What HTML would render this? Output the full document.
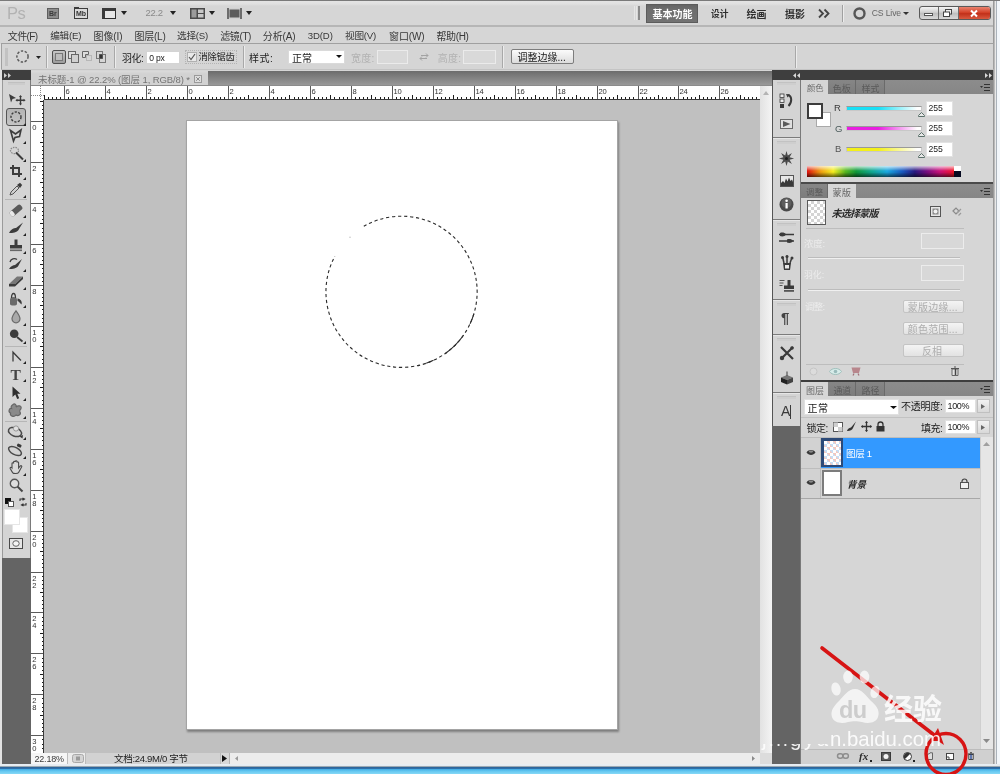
<!DOCTYPE html>
<html><head><meta charset="utf-8"><title>Photoshop</title><style>
*{box-sizing:border-box}
html,body{margin:0;padding:0}
body{width:1000px;height:774px;position:relative;overflow:hidden;background:#d6d6d6;font-family:"Liberation Sans","Noto Sans CJK SC",sans-serif;font-size:10px;color:#222;line-height:1}
.a{position:absolute}
.t{position:absolute;white-space:nowrap;line-height:14px}
svg{position:absolute;overflow:visible}
</style></head><body><div class="a" style="left:0;top:0;width:1000px;height:774px;will-change:transform">
<div class="a" style="left:0px;top:0px;width:1000px;height:774px;background:#d6d6d6"></div>
<div class="a" style="left:0px;top:1px;width:1000px;height:24px;background:linear-gradient(#e4e4e4 0,#e0e0e0 3px,#d6d6d6 5px)"></div>
<div class="a" style="left:0px;top:0px;width:1000px;height:1px;background:#7a7a7a"></div>
<div class="t" style="left:7.0px;top:6.0px;font-size:16.50px;letter-spacing:-0.50px;color:#b2b2b2">Ps</div>
<div class="a" style="left:0px;top:25px;width:1000px;height:1.6px;background:#b6b6b6"></div>
<div class="a" style="left:47px;top:8px;width:12px;height:11px;background:#8c8c8c;border:1px solid #5e5e5e"></div>
<div class="t" style="left:49px;top:8px;font-size:7px;line-height:11px;color:#3a3a3a;font-weight:bold">Br</div>
<div class="a" style="left:74px;top:8px;width:14px;height:11px;background:#d9d9d9;border:1px solid #3c3c3c"></div>
<div class="a" style="left:74px;top:7px;width:5px;height:2px;background:#3c3c3c"></div>
<div class="t" style="left:76px;top:8px;font-size:7px;line-height:11px;color:#333;font-weight:bold">Mb</div>
<div class="a" style="left:102px;top:8px;width:14px;height:11px;background:#e6e6e6;border:1px solid #2e2e2e;border-top:3px solid #3a3a3a;border-left:3px solid #3a3a3a"></div>
<svg style="left:121px;top:11px" width="6" height="4" viewBox="0 0 6 4" ><path d="M0 0H6L3.0 4Z" fill="#222"/></svg>
<div class="t" style="left:145.5px;top:6.0px;font-size:9.50px;letter-spacing:-0.33px;color:#8a8a8a">22.2</div>
<svg style="left:170px;top:11px" width="6" height="4" viewBox="0 0 6 4" ><path d="M0 0H6L3.0 4Z" fill="#222"/></svg>
<svg style="left:190px;top:8px" width="15" height="11" viewBox="0 0 15 11" ><rect x="0" y="0" width="15" height="11" fill="#4a4a4a"/><rect x="1.5" y="1.5" width="5" height="8" fill="#9a9a9a"/><rect x="8" y="1.5" width="5.5" height="3.5" fill="#c8c8c8"/><rect x="8" y="6" width="5.5" height="3.5" fill="#c8c8c8"/></svg>
<svg style="left:209px;top:11px" width="6" height="4" viewBox="0 0 6 4" ><path d="M0 0H6L3.0 4Z" fill="#222"/></svg>
<svg style="left:227px;top:8px" width="15" height="11" viewBox="0 0 15 11" ><rect x="0" y="0" width="15" height="11" fill="#d0d0d0"/><rect x="2.5" y="1.5" width="10" height="8" fill="#5c5c5c"/><path d="M1 0V11M14 0V11" stroke="#444" stroke-width="1.4"/></svg>
<svg style="left:246px;top:11px" width="6" height="4" viewBox="0 0 6 4" ><path d="M0 0H6L3.0 4Z" fill="#222"/></svg>
<div class="a" style="left:638px;top:6px;width:1.6px;height:14px;background:#8a8a8a"></div>
<div class="a" style="left:634px;top:6px;width:1px;height:14px;background:#e6e6e6"></div>
<div class="a" style="left:636px;top:6px;width:1px;height:14px;background:#e6e6e6"></div>
<div class="a" style="left:646px;top:4px;width:52px;height:19px;background:linear-gradient(#646464,#6e6e6e 30%,#727272);border:1px solid #5c5c5c"></div>
<div class="t" style="left:652.5px;top:7.5px;font-size:10px;font-weight:bold;color:#fff">基本功能</div>
<div class="t" style="left:711.0px;top:6.5px;font-size:8.76px;font-weight:bold;color:#2e2e2e">设计</div>
<div class="t" style="left:746.6px;top:7.5px;font-size:10px;font-weight:bold;letter-spacing:-0.10px;color:#2e2e2e">绘画</div>
<div class="t" style="left:785.0px;top:7.5px;font-size:10px;font-weight:bold;color:#2e2e2e">摄影</div>
<svg style="left:818px;top:9px" width="12" height="9" viewBox="0 0 12 9" ><path d="M1 0.5L5 4.5L1 8.5M6.5 0.5L10.5 4.5L6.5 8.5" fill="none" stroke="#444" stroke-width="1.8"/></svg>
<div class="a" style="left:842px;top:5px;width:1px;height:17px;background:#a0a0a0"></div>
<div class="a" style="left:843px;top:5px;width:1px;height:17px;background:#ececec"></div>
<svg style="left:853px;top:7px" width="13" height="13" viewBox="0 0 13 13" ><circle cx="6.5" cy="6.5" r="5" fill="none" stroke="#565656" stroke-width="2.4"/></svg>
<div class="t" style="left:871.7px;top:6.3px;font-size:8.63px;letter-spacing:-0.13px;color:#666">CS Live</div>
<svg style="left:903px;top:12px" width="6" height="3" viewBox="0 0 6 3" ><path d="M0 0H6L3.0 3Z" fill="#333"/></svg>
<div class="a" style="left:919px;top:6px;width:72px;height:14px;border:1px solid #5a5a5a;border-radius:3px;background:linear-gradient(#f4f4f4,#cfcfcf 45%,#bdbdbd 50%,#d8d8d8)"></div>
<div class="a" style="left:958px;top:7px;width:32px;height:12px;background:linear-gradient(#e9836f,#d5432a 45%,#c2311a 55%,#d9593f);border-radius:0 2px 2px 0"></div>
<div class="a" style="left:938px;top:7px;width:1px;height:12px;background:#6a6a6a"></div>
<div class="a" style="left:958px;top:7px;width:1px;height:12px;background:#6a6a6a"></div>
<div class="a" style="left:924px;top:13px;width:9px;height:3px;background:#fff;border:1px solid #555"></div>
<svg style="left:943px;top:9px" width="10" height="8" viewBox="0 0 10 8" ><rect x="2.5" y="0.5" width="6" height="4.5" fill="#eee" stroke="#444"/><rect x="0.5" y="3" width="6" height="4.5" fill="#fff" stroke="#444"/></svg>
<svg style="left:970px;top:10px" width="8" height="7" viewBox="0 0 8 7" ><path d="M1 0.5L7 6.5M7 0.5L1 6.5" stroke="#fff" stroke-width="2"/></svg>
<div class="a" style="left:993px;top:1px;width:7px;height:764px;background:linear-gradient(90deg,#9a9a9a 0,#9a9a9a 1px,#bababa 1px,#bababa 2px,#e8e8e8 2px,#e8e8e8 3.5px,#aab2ba 3.5px,#aab2ba 4.5px,#f2f6fa 4.5px)"></div>
<div class="a" style="left:0px;top:44px;width:1.5px;height:720px;background:#e2e2e2"></div>
<div class="t" style="left:7.8px;top:30.3px;font-size:10px;letter-spacing:-0.62px;color:#383838">文件(F)</div>
<div class="t" style="left:50.2px;top:29.3px;font-size:9.66px;letter-spacing:-0.25px;color:#383838">编辑(E)</div>
<div class="t" style="left:93.5px;top:30.3px;font-size:10px;letter-spacing:-0.12px;color:#383838">图像(I)</div>
<div class="t" style="left:134.5px;top:30.3px;font-size:10px;letter-spacing:-0.25px;color:#383838">图层(L)</div>
<div class="t" style="left:177.0px;top:29.3px;font-size:9.66px;letter-spacing:-0.25px;color:#383838">选择(S)</div>
<div class="t" style="left:220.2px;top:30.3px;font-size:10px;letter-spacing:-0.38px;color:#383838">滤镜(T)</div>
<div class="t" style="left:262.8px;top:30.3px;font-size:10px;letter-spacing:-0.12px;color:#383838">分析(A)</div>
<div class="t" style="left:307.8px;top:29.2px;font-size:9.58px;letter-spacing:-0.12px;color:#383838">3D(D)</div>
<div class="t" style="left:345.0px;top:29.3px;font-size:9.66px;letter-spacing:-0.25px;color:#383838">视图(V)</div>
<div class="t" style="left:389.0px;top:30.3px;font-size:10px;letter-spacing:-0.12px;color:#383838">窗口(W)</div>
<div class="t" style="left:436.5px;top:30.3px;font-size:10px;letter-spacing:-0.38px;color:#383838">帮助(H)</div>
<div class="a" style="left:1px;top:43px;width:993px;height:27px;background:#d5d5d5;border:1px solid #a0a0a0;border-bottom-color:#c4c4c4;border-top-width:1.8px"></div>
<div class="a" style="left:5px;top:48px;width:3px;height:18px;background:#c2c2c2"></div>
<svg style="left:16px;top:50px" width="13" height="13" viewBox="0 0 13 13" ><ellipse cx="6.5" cy="6.5" rx="5.6" ry="5.6" fill="none" stroke="#5a5a5a" stroke-width="1.5" stroke-dasharray="2.4 1.6"/></svg>
<svg style="left:36px;top:56px" width="5" height="3" viewBox="0 0 5 3" ><path d="M0 0H5L2.5 3Z" fill="#222"/></svg>
<div class="a" style="left:46px;top:46px;width:1px;height:22px;background:#a8a8a8"></div>
<div class="a" style="left:47px;top:46px;width:1px;height:22px;background:#ececec"></div>
<div class="a" style="left:52px;top:50px;width:14px;height:14px;border:1px solid #4e4e4e;border-radius:2px;background:linear-gradient(#c6c6c6,#9c9c9c)"></div>
<div class="a" style="left:55px;top:53px;width:8px;height:8px;border:1px solid #777;background:#bdbdbd"></div>
<svg style="left:68px;top:51px" width="11" height="12" viewBox="0 0 11 12" ><rect x="0.5" y="0.5" width="7" height="7" fill="#ddd" stroke="#666"/><rect x="3.5" y="3.5" width="7" height="8" fill="#d0d0d0" stroke="#666"/></svg>
<svg style="left:82px;top:51px" width="10" height="10" viewBox="0 0 10 10" ><path d="M0.5 0.5H6.5V3.5H3.5V6.5H0.5Z" fill="#ddd" stroke="#666"/><rect x="4.5" y="4.5" width="5" height="5" fill="none" stroke="#999" stroke-dasharray="1 1"/></svg>
<svg style="left:96px;top:51px" width="10" height="12" viewBox="0 0 10 12" ><rect x="0.5" y="0.5" width="6" height="7" fill="none" stroke="#777"/><rect x="3.5" y="3.5" width="6" height="8" fill="none" stroke="#777"/><rect x="3.5" y="3.5" width="3" height="4" fill="#333"/></svg>
<div class="a" style="left:114px;top:46px;width:1px;height:22px;background:#a8a8a8"></div>
<div class="a" style="left:115px;top:46px;width:1px;height:22px;background:#ececec"></div>
<div class="t" style="left:122.0px;top:51.5px;font-size:10px;letter-spacing:-0.50px;color:#222">羽化:</div>
<div class="a" style="left:146px;top:51px;width:34px;height:13px;background:#fff;border:1px solid #d4d4d4"></div>
<div class="t" style="left:149.3px;top:51.0px;font-size:8.56px;letter-spacing:-0.20px;color:#222">0 px</div>
<div class="a" style="left:185px;top:50px;width:52px;height:14px;border:1px dotted #b4b4b4"></div>
<div class="a" style="left:187px;top:52px;width:10px;height:10px;background:#e9e9e9;border:1px solid #b0b0b0"></div>
<svg style="left:188px;top:53px" width="8" height="8" viewBox="0 0 8 8" ><path d="M1 4L3 6.5L7 1" fill="none" stroke="#555" stroke-width="1.2"/></svg>
<div class="t" style="left:198.5px;top:50.0px;font-size:9.27px;letter-spacing:-0.27px;color:#1c1c1c">消除锯齿</div>
<div class="a" style="left:243px;top:46px;width:1px;height:22px;background:#a8a8a8"></div>
<div class="a" style="left:244px;top:46px;width:1px;height:22px;background:#ececec"></div>
<div class="t" style="left:249.0px;top:51.5px;font-size:10px;letter-spacing:0.50px;color:#222">样式:</div>
<div class="a" style="left:288px;top:50px;width:57px;height:14px;background:#fff;border:1px solid #dadada"></div>
<div class="t" style="left:292.0px;top:51.5px;font-size:10px;color:#222">正常</div>
<svg style="left:336px;top:55px" width="6" height="3" viewBox="0 0 6 3" ><path d="M0 0H6L3.0 3Z" fill="#111"/></svg>
<div class="t" style="left:351.0px;top:51.5px;font-size:10px;letter-spacing:0.20px;color:#b2b2b2">宽度:</div>
<div class="a" style="left:377px;top:50px;width:31px;height:14px;background:#d9d9d9;border:1px solid #ebebeb"></div>
<svg style="left:419px;top:53px" width="10" height="8" viewBox="0 0 10 8" ><path d="M2 2.5H9M7 0.5L9 2.5L7 4.5M8 5.5H1M3 3.5L1 5.5L3 7.5" fill="none" stroke="#a2a2a2" stroke-width="1"/></svg>
<div class="t" style="left:437.7px;top:51.5px;font-size:10px;letter-spacing:0.30px;color:#b2b2b2">高度:</div>
<div class="a" style="left:463px;top:50px;width:33px;height:14px;background:#d9d9d9;border:1px solid #ebebeb"></div>
<div class="a" style="left:502px;top:46px;width:1px;height:22px;background:#a8a8a8"></div>
<div class="a" style="left:503px;top:46px;width:1px;height:22px;background:#ececec"></div>
<div class="a" style="left:511px;top:49px;width:63px;height:15px;border:1px solid #7d7d7d;border-radius:2px;background:linear-gradient(#fbfbfb,#dcdcdc)"></div>
<div class="t" style="left:517.5px;top:51.0px;font-size:10px;color:#1a1a1a">调整边缘...</div>
<div class="a" style="left:795px;top:46px;width:1px;height:22px;background:#a8a8a8"></div>
<div class="a" style="left:796px;top:46px;width:1px;height:22px;background:#ececec"></div>
<div class="a" style="left:1.5px;top:70.4px;width:29.5px;height:9.3px;background:#3e3e3e"></div>
<div class="a" style="left:31px;top:71px;width:741px;height:15px;background:linear-gradient(#6c6c6c,#9c9c9c)"></div>
<div class="a" style="left:31px;top:71px;width:177px;height:15px;background:linear-gradient(#dadada,#d2d2d2 3px)"></div>
<div class="a" style="left:31px;top:85px;width:741px;height:1px;background:#8c8c8c"></div>
<div class="t" style="left:38.0px;top:73.4px;font-size:9.50px;letter-spacing:-0.10px;color:#747474">未标题-1 @ 22.2% (图层 1, RGB/8) *</div>
<svg style="left:194px;top:75px" width="8" height="8" viewBox="0 0 8 8" ><rect x="0.5" y="0.5" width="7" height="7" fill="#dedede" stroke="#9a9a9a"/><path d="M2.2 2.2L5.8 5.8M5.8 2.2L2.2 5.8" stroke="#8a8a8a" stroke-width="1"/></svg>
<div class="a" style="left:1.5px;top:79.7px;width:29.5px;height:478.3px;background:#d4d4d4;border-left:1px solid #9a9a9a;border-right:1px solid #7a7a7a"></div>
<div class="a" style="left:1.5px;top:558px;width:29.5px;height:206px;background:#646464"></div>
<svg style="left:4px;top:73px" width="7" height="5" viewBox="0 0 7 5" ><path d="M0 0L3 2.5L0 5ZM4 0L7 2.5L4 5Z" fill="#d0d0d0"/></svg>
<div class="a" style="left:8px;top:82px;width:17px;height:3px;background:#cccccc;border-top:1px solid #c0c0c0"></div>
<svg style="left:8px;top:93px" width="17" height="12" viewBox="0 0 17 12" ><path d="M1 1L8 5L4.5 6L3 9.5Z" fill="#3c3c3c"/><path d="M12.5 3.5V11M8.8 7.2H16.2" stroke="#3c3c3c" stroke-width="1.4"/><path d="M12.5 2L14 4H11ZM12.5 12.4L14 10.4H11ZM7.4 7.2L9.4 5.7V8.7ZM17.6 7.2L15.6 5.7V8.7Z" fill="#3c3c3c"/></svg>
<div class="a" style="left:6px;top:108px;width:20px;height:18px;border:1px solid #555;border-radius:3px;background:linear-gradient(#b4b4b4,#c4c4c4)"></div>
<svg style="left:10px;top:111px" width="12" height="12" viewBox="0 0 12 12" ><circle cx="6" cy="6" r="5" fill="none" stroke="#3c3c3c" stroke-width="1.4" stroke-dasharray="2.2 1.4"/></svg>
<svg style="left:22.5px;top:122.5px" width="3" height="3" viewBox="0 0 3 3" ><path d="M3 0V3H0Z" fill="#222"/></svg>
<svg style="left:9px;top:129px" width="14" height="13" viewBox="0 0 14 13" ><path d="M1.5 1.5L6.5 5L12 1L10.5 7.5L6 8.5L4.5 12Z" fill="none" stroke="#3c3c3c" stroke-width="1.6"/></svg>
<svg style="left:22.5px;top:140.5px" width="3" height="3" viewBox="0 0 3 3" ><path d="M3 0V3H0Z" fill="#222"/></svg>
<svg style="left:9px;top:146px" width="16" height="15" viewBox="0 0 16 15" ><ellipse cx="5.5" cy="4.5" rx="4" ry="3.2" fill="none" stroke="#8a8a8a" stroke-width="1.3" stroke-dasharray="1.5 1"/><path d="M7 6.5L14 13.5" stroke="#3c3c3c" stroke-width="2"/></svg>
<svg style="left:22.5px;top:158.5px" width="3" height="3" viewBox="0 0 3 3" ><path d="M3 0V3H0Z" fill="#222"/></svg>
<svg style="left:10px;top:165px" width="12" height="12" viewBox="0 0 12 12" ><path d="M3 0V9H12M0 3H9V12" fill="none" stroke="#3c3c3c" stroke-width="2"/></svg>
<svg style="left:22.5px;top:176.5px" width="3" height="3" viewBox="0 0 3 3" ><path d="M3 0V3H0Z" fill="#222"/></svg>
<svg style="left:9px;top:182px" width="14" height="14" viewBox="0 0 14 14" ><path d="M1 13L2 10L8 4L10 6L4 12Z" fill="#cfcfcf" stroke="#555" stroke-width="1"/><path d="M8 3L11 0.8L13.2 3L11 6Z" fill="#3c3c3c"/></svg>
<svg style="left:22.5px;top:194.5px" width="3" height="3" viewBox="0 0 3 3" ><path d="M3 0V3H0Z" fill="#222"/></svg>
<div class="a" style="left:5px;top:199px;width:22px;height:1px;background:#b6b6b6"></div>
<svg style="left:8px;top:203px" width="16" height="15" viewBox="0 0 16 15" ><g transform="rotate(-40 8 7.5)"><rect x="1" y="4.5" width="14" height="6" rx="2" fill="#5a5a5a"/><rect x="1" y="4.5" width="4" height="6" rx="2" fill="#e8e8e8"/></g></svg>
<svg style="left:22.5px;top:214.5px" width="3" height="3" viewBox="0 0 3 3" ><path d="M3 0V3H0Z" fill="#222"/></svg>
<svg style="left:8px;top:222px" width="16" height="12" viewBox="0 0 16 12" ><path d="M1 11C3 7 6 6 8 6L15 0.5L11 7C10 10 5 11.5 1 11Z" fill="#3c3c3c"/></svg>
<svg style="left:22.5px;top:232.5px" width="3" height="3" viewBox="0 0 3 3" ><path d="M3 0V3H0Z" fill="#222"/></svg>
<svg style="left:9px;top:239px" width="14" height="13" viewBox="0 0 14 13" ><path d="M5.5 0.5H8.5V6H13V9.5H1V6H5.5Z" fill="#3c3c3c"/><rect x="1" y="10.5" width="12" height="1.6" fill="#666"/></svg>
<svg style="left:22.5px;top:250.5px" width="3" height="3" viewBox="0 0 3 3" ><path d="M3 0V3H0Z" fill="#222"/></svg>
<svg style="left:8px;top:257px" width="16" height="13" viewBox="0 0 16 13" ><path d="M1 12C3 9 5 8 7 8L14 2L10.5 8.5C9.5 11 5 12.5 1 12Z" fill="#3c3c3c"/><path d="M2 5A4.5 4.5 0 0 1 9 2.5" fill="none" stroke="#3c3c3c" stroke-width="1.3"/></svg>
<svg style="left:22.5px;top:268.5px" width="3" height="3" viewBox="0 0 3 3" ><path d="M3 0V3H0Z" fill="#222"/></svg>
<svg style="left:8px;top:275px" width="16" height="12" viewBox="0 0 16 12" ><path d="M1 9L9 1.5H15L7 9Z" fill="#777"/><path d="M1 9H7L15 1.5V4L7 11.5H1Z" fill="#3c3c3c"/></svg>
<svg style="left:22.5px;top:286.5px" width="3" height="3" viewBox="0 0 3 3" ><path d="M3 0V3H0Z" fill="#222"/></svg>
<svg style="left:8px;top:292px" width="16" height="14" viewBox="0 0 16 14" ><path d="M2 7.5C2 4 9 4 9 7.5V12C9 14 2 14 2 12Z" fill="#6a6a6a"/><path d="M3.5 6C3.5 0 7.5 0 7.5 6" fill="none" stroke="#3c3c3c" stroke-width="1.3"/><path d="M9.5 6.5C13 7 14.5 10 13.5 12.5C12 11 11 9.5 9.5 9Z" fill="#3c3c3c"/></svg>
<svg style="left:22.5px;top:304.5px" width="3" height="3" viewBox="0 0 3 3" ><path d="M3 0V3H0Z" fill="#222"/></svg>
<svg style="left:11px;top:310px" width="10" height="13" viewBox="0 0 10 13" ><path d="M5 0.8C5 0.8 9 6 9 8.8A4 4 0 0 1 1 8.8C1 6 5 0.8 5 0.8Z" fill="#a9a9a9" stroke="#6a6a6a" stroke-width="1.2"/></svg>
<svg style="left:22.5px;top:322.5px" width="3" height="3" viewBox="0 0 3 3" ><path d="M3 0V3H0Z" fill="#222"/></svg>
<svg style="left:9px;top:329px" width="15" height="13" viewBox="0 0 15 13" ><circle cx="5.2" cy="4.8" r="4.3" fill="#3c3c3c"/><path d="M8 8L13.5 12.5" stroke="#3c3c3c" stroke-width="1.8"/></svg>
<svg style="left:22.5px;top:340.5px" width="3" height="3" viewBox="0 0 3 3" ><path d="M3 0V3H0Z" fill="#222"/></svg>
<div class="a" style="left:5px;top:346px;width:22px;height:1px;background:#b6b6b6"></div>
<svg style="left:11px;top:351px" width="12" height="12" viewBox="0 0 12 12" ><path d="M2 10.5V1.2L10 9.5" fill="none" stroke="#3c3c3c" stroke-width="1.3"/></svg>
<svg style="left:22.5px;top:360.5px" width="3" height="3" viewBox="0 0 3 3" ><path d="M3 0V3H0Z" fill="#222"/></svg>
<div class="t" style="left:10.5px;top:367px;font-family:'Liberation Serif',serif;font-weight:bold;font-size:15.5px;line-height:16px;color:#444">T</div>
<svg style="left:22.5px;top:378.5px" width="3" height="3" viewBox="0 0 3 3" ><path d="M3 0V3H0Z" fill="#222"/></svg>
<svg style="left:12px;top:386px" width="9" height="14" viewBox="0 0 9 14" ><path d="M0.5 0.5V11L3.3 8.4L5.2 13L7.2 12.2L5.3 7.8H8.5Z" fill="#2e2e2e"/></svg>
<svg style="left:22.5px;top:397.5px" width="3" height="3" viewBox="0 0 3 3" ><path d="M3 0V3H0Z" fill="#222"/></svg>
<svg style="left:8px;top:403px" width="16" height="15" viewBox="0 0 16 15" ><path d="M5 1.5C7 0 9 2.5 8 4C10 2 14 2.5 13 5.5C12.5 7 11 7 12 9C13.5 11.5 10 13.5 8 12C6 14.5 1.5 13 2.5 10C0 9 1 5 3.5 5.5C2.5 4 3.5 2.5 5 1.5Z" fill="#8a8a8a" stroke="#666" stroke-width="1.2"/></svg>
<svg style="left:22.5px;top:415.5px" width="3" height="3" viewBox="0 0 3 3" ><path d="M3 0V3H0Z" fill="#222"/></svg>
<div class="a" style="left:5px;top:421px;width:22px;height:1px;background:#b6b6b6"></div>
<svg style="left:7px;top:424px" width="18" height="15" viewBox="0 0 18 15" ><ellipse cx="8" cy="8" rx="6.8" ry="4.2" fill="none" stroke="#4a4a4a" stroke-width="1.5" transform="rotate(20 8 8)"/><circle cx="9" cy="4.5" r="2.6" fill="#e2e2e2" stroke="#888" stroke-width="0.8"/><path d="M12.5 12.5L16 11L15.5 14.5Z" fill="#3a3a3a"/></svg>
<svg style="left:22.5px;top:436.5px" width="3" height="3" viewBox="0 0 3 3" ><path d="M3 0V3H0Z" fill="#222"/></svg>
<svg style="left:7px;top:443px" width="18" height="15" viewBox="0 0 18 15" ><ellipse cx="8" cy="8" rx="7" ry="3.6" fill="none" stroke="#4a4a4a" stroke-width="1.5" transform="rotate(28 8 8)"/><rect x="10" y="1" width="4.5" height="3" rx="1" fill="#3a3a3a" transform="rotate(25 12 2.5)"/></svg>
<svg style="left:22.5px;top:455.5px" width="3" height="3" viewBox="0 0 3 3" ><path d="M3 0V3H0Z" fill="#222"/></svg>
<svg style="left:9px;top:460px" width="14" height="15" viewBox="0 0 14 15" ><path d="M3 8V3.5C3 2.5 4.6 2.5 4.6 3.5V2C4.6 1 6.3 1 6.3 2V1.6C6.3 0.6 8 0.6 8 1.6V2.6C8 1.8 9.6 1.8 9.6 2.8V8L11.3 6C12.2 5.2 13.3 6 12.6 7L9.6 12.5C9 13.8 4.5 14 3.6 12.6L1.2 8.6C0.7 7.6 2 6.9 3 8Z" fill="#d9d9d9" stroke="#4a4a4a" stroke-width="1.1"/></svg>
<svg style="left:22.5px;top:472.5px" width="3" height="3" viewBox="0 0 3 3" ><path d="M3 0V3H0Z" fill="#222"/></svg>
<svg style="left:9px;top:478px" width="15" height="15" viewBox="0 0 15 15" ><circle cx="5.5" cy="5.5" r="4.2" fill="#dedede" stroke="#555" stroke-width="1.4"/><path d="M8.6 8.6L13.5 13.5" stroke="#444" stroke-width="2"/></svg>
<div class="a" style="left:5px;top:498px;width:6px;height:6px;background:#111"></div>
<div class="a" style="left:8px;top:501px;width:6px;height:6px;background:#fff;border:1px solid #555"></div>
<svg style="left:19px;top:498px" width="8" height="8" viewBox="0 0 8 8" ><path d="M1 3V1H5M3.5 0L5.5 1L3.5 2.2M7 5V7H3M4.5 8L2.5 7L4.5 5.8" fill="none" stroke="#333" stroke-width="1.1"/></svg>
<div class="a" style="left:12px;top:517px;width:16px;height:16px;background:#fff;border:1px solid #e6e6e6"></div>
<div class="a" style="left:4px;top:509px;width:16px;height:16px;background:#fff;border:1px solid #e6e6e6"></div>
<div class="a" style="left:9px;top:538px;width:14px;height:11px;background:#e6e6e6;border:1px solid #4a4a4a"></div>
<svg style="left:12px;top:540px" width="8" height="7" viewBox="0 0 8 7" ><ellipse cx="4" cy="3.5" rx="3.2" ry="2.8" fill="#f4f4f4" stroke="#666" stroke-width="1"/></svg>
<div class="a" style="left:31px;top:86px;width:729px;height:14px;background:#fff"></div>
<div class="a" style="left:31px;top:100px;width:13px;height:653px;background:#fff"></div>
<svg style="left:0;top:86px" width="760" height="14" viewBox="0 0 760 14"><path d="M64.5 0V14 M105.5 0V14 M146.5 0V14 M187.5 0V14 M228.5 0V14 M269.5 0V14 M310.5 0V14 M351.5 0V14 M392.5 0V14 M433.5 0V14 M474.5 0V14 M515.5 0V14 M556.5 0V14 M597.5 0V14 M638.5 0V14 M678.5 0V14 M719.5 0V14" stroke="#5a5a5a" stroke-width="1" shape-rendering="crispEdges"/><path d="M44.5 9V14 M48.5 11V14 M52.5 11V14 M56.5 11V14 M60.5 11V14 M68.5 11V14 M72.5 11V14 M76.5 11V14 M81.5 11V14 M85.5 9V14 M89.5 11V14 M93.5 11V14 M97.5 11V14 M101.5 11V14 M109.5 11V14 M113.5 11V14 M117.5 11V14 M122.5 11V14 M126.5 9V14 M130.5 11V14 M134.5 11V14 M138.5 11V14 M142.5 11V14 M150.5 11V14 M154.5 11V14 M158.5 11V14 M162.5 11V14 M167.5 9V14 M171.5 11V14 M175.5 11V14 M179.5 11V14 M183.5 11V14 M191.5 11V14 M195.5 11V14 M199.5 11V14 M203.5 11V14 M208.5 9V14 M212.5 11V14 M216.5 11V14 M220.5 11V14 M224.5 11V14 M232.5 11V14 M236.5 11V14 M240.5 11V14 M244.5 11V14 M248.5 9V14 M253.5 11V14 M257.5 11V14 M261.5 11V14 M265.5 11V14 M273.5 11V14 M277.5 11V14 M281.5 11V14 M285.5 11V14 M289.5 9V14 M294.5 11V14 M298.5 11V14 M302.5 11V14 M306.5 11V14 M314.5 11V14 M318.5 11V14 M322.5 11V14 M326.5 11V14 M330.5 9V14 M334.5 11V14 M339.5 11V14 M343.5 11V14 M347.5 11V14 M355.5 11V14 M359.5 11V14 M363.5 11V14 M367.5 11V14 M371.5 9V14 M375.5 11V14 M380.5 11V14 M384.5 11V14 M388.5 11V14 M396.5 11V14 M400.5 11V14 M404.5 11V14 M408.5 11V14 M412.5 9V14 M416.5 11V14 M420.5 11V14 M425.5 11V14 M429.5 11V14 M437.5 11V14 M441.5 11V14 M445.5 11V14 M449.5 11V14 M453.5 9V14 M457.5 11V14 M461.5 11V14 M466.5 11V14 M470.5 11V14 M478.5 11V14 M482.5 11V14 M486.5 11V14 M490.5 11V14 M494.5 9V14 M498.5 11V14 M502.5 11V14 M506.5 11V14 M511.5 11V14 M519.5 11V14 M523.5 11V14 M527.5 11V14 M531.5 11V14 M535.5 9V14 M539.5 11V14 M543.5 11V14 M547.5 11V14 M552.5 11V14 M560.5 11V14 M564.5 11V14 M568.5 11V14 M572.5 11V14 M576.5 9V14 M580.5 11V14 M584.5 11V14 M588.5 11V14 M592.5 11V14 M601.5 11V14 M605.5 11V14 M609.5 11V14 M613.5 11V14 M617.5 9V14 M621.5 11V14 M625.5 11V14 M629.5 11V14 M633.5 11V14 M642.5 11V14 M646.5 11V14 M650.5 11V14 M654.5 11V14 M658.5 9V14 M662.5 11V14 M666.5 11V14 M670.5 11V14 M674.5 11V14 M683.5 11V14 M687.5 11V14 M691.5 11V14 M695.5 11V14 M699.5 9V14 M703.5 11V14 M707.5 11V14 M711.5 11V14 M715.5 11V14 M724.5 11V14 M728.5 11V14 M732.5 11V14 M736.5 11V14 M740.5 9V14 M744.5 11V14 M748.5 11V14 M752.5 11V14 M756.5 11V14" stroke="#1c1c1c" stroke-width="1" shape-rendering="crispEdges"/><path d="M44 13.5H760" stroke="#3a3a3a" stroke-width="1" shape-rendering="crispEdges"/><text x="65.4" y="7.8" font-size="7.6" fill="#333" font-family="Liberation Sans,sans-serif">6</text><text x="106.4" y="7.8" font-size="7.6" fill="#333" font-family="Liberation Sans,sans-serif">4</text><text x="147.4" y="7.8" font-size="7.6" fill="#333" font-family="Liberation Sans,sans-serif">2</text><text x="188.4" y="7.8" font-size="7.6" fill="#333" font-family="Liberation Sans,sans-serif">0</text><text x="229.4" y="7.8" font-size="7.6" fill="#333" font-family="Liberation Sans,sans-serif">2</text><text x="270.4" y="7.8" font-size="7.6" fill="#333" font-family="Liberation Sans,sans-serif">4</text><text x="311.4" y="7.8" font-size="7.6" fill="#333" font-family="Liberation Sans,sans-serif">6</text><text x="352.4" y="7.8" font-size="7.6" fill="#333" font-family="Liberation Sans,sans-serif">8</text><text x="393.4" y="7.8" font-size="7.6" fill="#333" font-family="Liberation Sans,sans-serif">10</text><text x="434.4" y="7.8" font-size="7.6" fill="#333" font-family="Liberation Sans,sans-serif">12</text><text x="475.4" y="7.8" font-size="7.6" fill="#333" font-family="Liberation Sans,sans-serif">14</text><text x="516.4" y="7.8" font-size="7.6" fill="#333" font-family="Liberation Sans,sans-serif">16</text><text x="557.4" y="7.8" font-size="7.6" fill="#333" font-family="Liberation Sans,sans-serif">18</text><text x="598.4" y="7.8" font-size="7.6" fill="#333" font-family="Liberation Sans,sans-serif">20</text><text x="639.4" y="7.8" font-size="7.6" fill="#333" font-family="Liberation Sans,sans-serif">22</text><text x="679.4" y="7.8" font-size="7.6" fill="#333" font-family="Liberation Sans,sans-serif">24</text><text x="720.4" y="7.8" font-size="7.6" fill="#333" font-family="Liberation Sans,sans-serif">26</text><path d="M31 9.5H44M40.5 0V14" stroke="#888" stroke-width="1" stroke-dasharray="1 1" shape-rendering="crispEdges"/></svg>
<svg style="left:0;top:0" width="50" height="753" viewBox="0 0 50 753"><path d="M31 121.5H44 M31 162.5H44 M31 203.5H44 M31 244.5H44 M31 285.5H44 M31 326.5H44 M31 367.5H44 M31 408.5H44 M31 449.5H44 M31 490.5H44 M31 531.5H44 M31 572.5H44 M31 612.5H44 M31 653.5H44 M31 694.5H44 M31 735.5H44" stroke="#5a5a5a" stroke-width="1" shape-rendering="crispEdges"/><path d="M40 101.5H44 M42 105.5H44 M42 109.5H44 M42 113.5H44 M42 117.5H44 M42 125.5H44 M42 129.5H44 M42 133.5H44 M42 137.5H44 M40 142.5H44 M42 146.5H44 M42 150.5H44 M42 154.5H44 M42 158.5H44 M42 166.5H44 M42 170.5H44 M42 174.5H44 M42 178.5H44 M40 182.5H44 M42 187.5H44 M42 191.5H44 M42 195.5H44 M42 199.5H44 M42 207.5H44 M42 211.5H44 M42 215.5H44 M42 219.5H44 M40 223.5H44 M42 228.5H44 M42 232.5H44 M42 236.5H44 M42 240.5H44 M42 248.5H44 M42 252.5H44 M42 256.5H44 M42 260.5H44 M40 264.5H44 M42 268.5H44 M42 273.5H44 M42 277.5H44 M42 281.5H44 M42 289.5H44 M42 293.5H44 M42 297.5H44 M42 301.5H44 M40 305.5H44 M42 309.5H44 M42 314.5H44 M42 318.5H44 M42 322.5H44 M42 330.5H44 M42 334.5H44 M42 338.5H44 M42 342.5H44 M40 346.5H44 M42 350.5H44 M42 354.5H44 M42 359.5H44 M42 363.5H44 M42 371.5H44 M42 375.5H44 M42 379.5H44 M42 383.5H44 M40 387.5H44 M42 391.5H44 M42 395.5H44 M42 400.5H44 M42 404.5H44 M42 412.5H44 M42 416.5H44 M42 420.5H44 M42 424.5H44 M40 428.5H44 M42 432.5H44 M42 436.5H44 M42 440.5H44 M42 445.5H44 M42 453.5H44 M42 457.5H44 M42 461.5H44 M42 465.5H44 M40 469.5H44 M42 473.5H44 M42 477.5H44 M42 481.5H44 M42 486.5H44 M42 494.5H44 M42 498.5H44 M42 502.5H44 M42 506.5H44 M40 510.5H44 M42 514.5H44 M42 518.5H44 M42 522.5H44 M42 526.5H44 M42 535.5H44 M42 539.5H44 M42 543.5H44 M42 547.5H44 M40 551.5H44 M42 555.5H44 M42 559.5H44 M42 563.5H44 M42 567.5H44 M42 576.5H44 M42 580.5H44 M42 584.5H44 M42 588.5H44 M40 592.5H44 M42 596.5H44 M42 600.5H44 M42 604.5H44 M42 608.5H44 M42 617.5H44 M42 621.5H44 M42 625.5H44 M42 629.5H44 M40 633.5H44 M42 637.5H44 M42 641.5H44 M42 645.5H44 M42 649.5H44 M42 658.5H44 M42 662.5H44 M42 666.5H44 M42 670.5H44 M40 674.5H44 M42 678.5H44 M42 682.5H44 M42 686.5H44 M42 690.5H44 M42 698.5H44 M42 703.5H44 M42 707.5H44 M42 711.5H44 M40 715.5H44 M42 719.5H44 M42 723.5H44 M42 727.5H44 M42 731.5H44 M42 739.5H44 M42 744.5H44 M42 748.5H44" stroke="#1c1c1c" stroke-width="1" shape-rendering="crispEdges"/><path d="M43.5 100V753" stroke="#3a3a3a" stroke-width="1" shape-rendering="crispEdges"/><text x="32.2" y="129.5" font-size="7.6" fill="#333" font-family="Liberation Sans,sans-serif">0</text><text x="32.2" y="170.5" font-size="7.6" fill="#333" font-family="Liberation Sans,sans-serif">2</text><text x="32.2" y="211.5" font-size="7.6" fill="#333" font-family="Liberation Sans,sans-serif">4</text><text x="32.2" y="252.5" font-size="7.6" fill="#333" font-family="Liberation Sans,sans-serif">6</text><text x="32.2" y="293.5" font-size="7.6" fill="#333" font-family="Liberation Sans,sans-serif">8</text><text x="32.2" y="334.5" font-size="7.6" fill="#333" font-family="Liberation Sans,sans-serif">1</text><text x="32.2" y="341.5" font-size="7.6" fill="#333" font-family="Liberation Sans,sans-serif">0</text><text x="32.2" y="375.5" font-size="7.6" fill="#333" font-family="Liberation Sans,sans-serif">1</text><text x="32.2" y="382.5" font-size="7.6" fill="#333" font-family="Liberation Sans,sans-serif">2</text><text x="32.2" y="416.5" font-size="7.6" fill="#333" font-family="Liberation Sans,sans-serif">1</text><text x="32.2" y="423.5" font-size="7.6" fill="#333" font-family="Liberation Sans,sans-serif">4</text><text x="32.2" y="457.5" font-size="7.6" fill="#333" font-family="Liberation Sans,sans-serif">1</text><text x="32.2" y="464.5" font-size="7.6" fill="#333" font-family="Liberation Sans,sans-serif">6</text><text x="32.2" y="498.5" font-size="7.6" fill="#333" font-family="Liberation Sans,sans-serif">1</text><text x="32.2" y="505.5" font-size="7.6" fill="#333" font-family="Liberation Sans,sans-serif">8</text><text x="32.2" y="539.5" font-size="7.6" fill="#333" font-family="Liberation Sans,sans-serif">2</text><text x="32.2" y="546.5" font-size="7.6" fill="#333" font-family="Liberation Sans,sans-serif">0</text><text x="32.2" y="580.5" font-size="7.6" fill="#333" font-family="Liberation Sans,sans-serif">2</text><text x="32.2" y="587.5" font-size="7.6" fill="#333" font-family="Liberation Sans,sans-serif">2</text><text x="32.2" y="620.5" font-size="7.6" fill="#333" font-family="Liberation Sans,sans-serif">2</text><text x="32.2" y="627.5" font-size="7.6" fill="#333" font-family="Liberation Sans,sans-serif">4</text><text x="32.2" y="661.5" font-size="7.6" fill="#333" font-family="Liberation Sans,sans-serif">2</text><text x="32.2" y="668.5" font-size="7.6" fill="#333" font-family="Liberation Sans,sans-serif">6</text><text x="32.2" y="702.5" font-size="7.6" fill="#333" font-family="Liberation Sans,sans-serif">2</text><text x="32.2" y="709.5" font-size="7.6" fill="#333" font-family="Liberation Sans,sans-serif">8</text><text x="32.2" y="743.5" font-size="7.6" fill="#333" font-family="Liberation Sans,sans-serif">3</text><text x="32.2" y="750.5" font-size="7.6" fill="#333" font-family="Liberation Sans,sans-serif">0</text></svg>
<div class="a" style="left:44px;top:100px;width:716px;height:653px;background:#c0c0c0"></div>
<div class="a" style="left:186px;top:120px;width:432px;height:610px;background:#fff;border:1px solid #a4a4a4;box-shadow:1px 2px 2px rgba(0,0,0,.35)"></div>
<svg style="left:0;top:0" width="760" height="753" viewBox="0 0 760 753"><path d="M363.8 226.3A75.6 75.6 0 1 1 334.8 256.3" fill="none" stroke="#2a2a2a" stroke-width="1.1" stroke-dasharray="3.2 2.8"/><path d="M473.9 313.9A75.6 75.6 0 0 1 470.1 323.7 M463.5 335.2A75.6 75.6 0 0 1 445.0 353.7 M433.5 360.3A75.6 75.6 0 0 1 426.2 363.3" fill="none" stroke="#2a2a2a" stroke-width="1.1"/><circle cx="350" cy="237.3" r="0.7" fill="#bbb"/></svg>
<div class="a" style="left:760px;top:86px;width:12px;height:667px;background:linear-gradient(90deg,#e2e2e2,#f4f4f4)"></div>
<div class="a" style="left:31px;top:753px;width:741px;height:11px;background:#ececec"></div>
<svg style="left:763px;top:91px" width="6" height="4" viewBox="0 0 6 4" ><path d="M0 4L3 0L6 4Z" fill="#b4b4b4"/></svg>
<div class="a" style="left:31px;top:753px;width:37px;height:11px;background:#f6f6f6;border-right:1px solid #bdbdbd"></div>
<div class="t" style="left:34.5px;top:751.5px;font-size:9px;letter-spacing:-0.20px;color:#3a3a3a">22.18%</div>
<svg style="left:72px;top:754px" width="12" height="9" viewBox="0 0 12 9" ><rect x="0.5" y="0.5" width="11" height="8" rx="2" fill="#d4d4d4" stroke="#a8a8a8"/><rect x="4" y="2.5" width="4" height="4" fill="#9a9a9a"/></svg>
<div class="a" style="left:85px;top:753px;width:136px;height:11px;background:#d2d2d2;border:1px solid #bcbcbc;border-width:0 1px"></div>
<div class="t" style="left:114.0px;top:752.0px;font-size:9.50px;letter-spacing:-0.30px;color:#222">文档:24.9M/0 字节</div>
<div class="a" style="left:221px;top:753px;width:9px;height:11px;background:#d8d8d8;border-right:1px solid #b4b4b4"></div>
<svg style="left:222px;top:755px" width="5" height="7" viewBox="0 0 5 7" ><path d="M0 0L5 3.5L0 7Z" fill="#111"/></svg>
<svg style="left:235px;top:756px" width="3" height="5" viewBox="0 0 3 5" ><path d="M3 0L0 2.5L3 5Z" fill="#9a9a9a"/></svg>
<svg style="left:752px;top:756px" width="3" height="5" viewBox="0 0 3 5" ><path d="M0 0L3 2.5L0 5Z" fill="#8a8a8a"/></svg>
<div class="a" style="left:760px;top:753px;width:12px;height:11px;background:#dcdcdc"></div>
<div class="a" style="left:772px;top:70.4px;width:221.4px;height:9.3px;background:#3e3e3e"></div>
<div class="a" style="left:772px;top:80px;width:29px;height:346px;background:#d4d4d4;border-left:1px solid #555;border-right:1px solid #6e6e6e"></div>
<div class="a" style="left:772px;top:426px;width:29px;height:338px;background:#646464"></div>
<div class="a" style="left:801px;top:80px;width:192px;height:684px;background:#d6d6d6"></div>
<svg style="left:793px;top:73px" width="7" height="5" viewBox="0 0 7 5" ><path d="M3 0L0 2.5L3 5ZM7 0L4 2.5L7 5Z" fill="#d8d8d8"/></svg>
<svg style="left:985px;top:73px" width="7" height="5" viewBox="0 0 7 5" ><path d="M0 0L3 2.5L0 5ZM4 0L7 2.5L4 5Z" fill="#d8d8d8"/></svg>
<div class="a" style="left:777px;top:82px;width:19px;height:3px;background:#cecece;border-top:1px solid #c2c2c2"></div>
<svg style="left:779px;top:93px" width="16" height="16" viewBox="0 0 16 16" ><rect x="1" y="1" width="4" height="3.5" fill="#eee" stroke="#3a3a3a" stroke-width="0.8"/><rect x="1" y="6" width="4" height="3.5" fill="#eee" stroke="#3a3a3a" stroke-width="0.8"/><rect x="1" y="11" width="4" height="4" fill="#3a3a3a"/><path d="M8.5 2C13 2.5 13.5 9 9.5 13" fill="none" stroke="#3a3a3a" stroke-width="2"/><path d="M7 1L11 1.5L8.5 4.5Z" fill="#3a3a3a"/></svg>
<svg style="left:780px;top:119px" width="13" height="10" viewBox="0 0 13 10" ><rect x="0.5" y="0.5" width="12" height="9" fill="#e0e0e0" stroke="#6a6a6a"/><path d="M3 2L10.5 5L3 8Z" fill="#5a5a5a"/></svg>
<div class="a" style="left:773px;top:137px;width:27px;height:1px;background:#7c7c7c"></div>
<div class="a" style="left:773px;top:138px;width:27px;height:1px;background:#e6e6e6"></div>
<div class="a" style="left:777px;top:141px;width:19px;height:3px;background:#cecece;border-top:1px solid #c2c2c2"></div>
<svg style="left:778px;top:150px" width="17" height="17" viewBox="0 0 17 17" ><path d="M8.5 0.9L9.8 5.4L13.9 3.1L11.6 7.2L16.1 8.5L11.6 9.8L13.9 13.9L9.8 11.6L8.5 16.1L7.2 11.6L3.1 13.9L5.4 9.8L0.9 8.5L5.4 7.2L3.1 3.1L7.2 5.4Z" fill="#4a4a4a"/><circle cx="8.5" cy="8.5" r="1.5" fill="#1e1e1e"/></svg>
<svg style="left:780px;top:175px" width="14" height="12" viewBox="0 0 14 12" ><rect x="0.5" y="0.5" width="13" height="11" fill="#e8e8e8" stroke="#555"/><path d="M1 11V8L3 6L4.5 8L6 3.5L7.5 6.5L9 2.5L10.5 6L12 4.5L13 7V11Z" fill="#3a3a3a"/></svg>
<svg style="left:779px;top:197px" width="15" height="15" viewBox="0 0 15 15" ><circle cx="7.5" cy="7.5" r="7" fill="#4a4a4a"/><circle cx="7.5" cy="6" r="5" fill="#6a6a6a" opacity=".6"/><rect x="6.5" y="6" width="2.2" height="5.5" fill="#fff"/><circle cx="7.6" cy="3.8" r="1.3" fill="#fff"/></svg>
<div class="a" style="left:773px;top:219px;width:27px;height:1px;background:#7c7c7c"></div>
<div class="a" style="left:773px;top:220px;width:27px;height:1px;background:#e6e6e6"></div>
<div class="a" style="left:777px;top:223px;width:19px;height:3px;background:#cecece;border-top:1px solid #c2c2c2"></div>
<svg style="left:778px;top:231px" width="17" height="14" viewBox="0 0 17 14" ><path d="M1 3.5H16M1 10H16" stroke="#3a3a3a" stroke-width="1.4"/><path d="M2 2C4 1 7 1.5 8 3.5C7 5.5 4 6 2 5Z M9 8.5C11 7.5 14 8 15 10C14 12 11 12.5 9 11.5Z" fill="#3a3a3a"/></svg>
<svg style="left:780px;top:255px" width="14" height="16" viewBox="0 0 14 16" ><path d="M3 8H11L10 15H4Z" fill="#3a3a3a"/><rect x="5" y="10" width="4" height="3.5" fill="#e8e8e8"/><path d="M4 8L2.5 2M7 8V0.5M10 8L12 2.5" stroke="#3a3a3a" stroke-width="1.5"/><circle cx="2.5" cy="2.5" r="1.5" fill="#3a3a3a"/><circle cx="7" cy="1.5" r="1.5" fill="#3a3a3a"/><circle cx="12" cy="3" r="1.5" fill="#3a3a3a"/></svg>
<svg style="left:779px;top:279px" width="16" height="14" viewBox="0 0 16 14" ><path d="M8.5 1H11.5V6.5H15V10H5V6.5H8.5Z" fill="#3a3a3a"/><rect x="5" y="11" width="10" height="1.8" fill="#555"/><path d="M0.5 1.5H5.5M0.5 4H4.5M0.5 6.5H3.5" stroke="#555" stroke-width="1"/></svg>
<div class="a" style="left:773px;top:299px;width:27px;height:1px;background:#7c7c7c"></div>
<div class="a" style="left:773px;top:300px;width:27px;height:1px;background:#e6e6e6"></div>
<div class="a" style="left:777px;top:303px;width:19px;height:3px;background:#cecece;border-top:1px solid #c2c2c2"></div>
<div class="t" style="left:781px;top:310px;font-size:15px;line-height:16px;color:#444;font-weight:bold">¶</div>
<div class="a" style="left:773px;top:334px;width:27px;height:1px;background:#7c7c7c"></div>
<div class="a" style="left:773px;top:335px;width:27px;height:1px;background:#e6e6e6"></div>
<div class="a" style="left:777px;top:338px;width:19px;height:3px;background:#cecece;border-top:1px solid #c2c2c2"></div>
<svg style="left:779px;top:345px" width="16" height="16" viewBox="0 0 16 16" ><path d="M2 2L14 14M14 2L2 14" stroke="#3a3a3a" stroke-width="2.2"/><circle cx="3" cy="13" r="2.2" fill="#3a3a3a"/><circle cx="13" cy="3" r="1.8" fill="#3a3a3a"/></svg>
<svg style="left:780px;top:371px" width="14" height="14" viewBox="0 0 14 14" ><path d="M7 4L13 6.5L7 9L1 6.5Z" fill="#777"/><path d="M1 6.5L7 9V13.5L1 11Z" fill="#222"/><path d="M13 6.5L7 9V13.5L13 11Z" fill="#444"/><path d="M7 0.5V5" stroke="#555" stroke-width="1.2"/></svg>
<div class="a" style="left:773px;top:392px;width:27px;height:1px;background:#7c7c7c"></div>
<div class="a" style="left:773px;top:393px;width:27px;height:1px;background:#e6e6e6"></div>
<div class="a" style="left:777px;top:396px;width:19px;height:3px;background:#cecece;border-top:1px solid #c2c2c2"></div>
<div class="t" style="left:781.0px;top:404.0px;font-size:14px;color:#3a3a3a">A</div>
<div class="a" style="left:790px;top:405px;width:1px;height:14px;background:#3a3a3a"></div>
<div class="a" style="left:0px;top:764px;width:1000px;height:3px;background:linear-gradient(#e9eef2 0,#e4eaef 2px,#9ba8b3 2px)"></div>
<div class="a" style="left:0px;top:767px;width:1000px;height:7px;background:linear-gradient(#2c6296 0,#2f6ea8 1.5px,#46b0e6 2.5px,#62c6f0 4px,#86d8f6 7px)"></div>
<div class="a" style="left:800px;top:80px;width:1px;height:684px;background:#7a7a7a"></div>
<div class="a" style="left:801px;top:80px;width:192px;height:14px;background:linear-gradient(#8c8c8c,#868686)"></div>
<div class="a" style="left:801px;top:80px;width:27px;height:14px;background:#d6d6d6"></div>
<div class="t" style="left:807.0px;top:81.5px;font-size:8.24px;color:#6a6a6a">颜色</div>
<div class="a" style="left:828px;top:80px;width:28px;height:14px;background:linear-gradient(#868686,#7c7c7c);border-right:1px solid #6a6a6a"></div>
<div class="t" style="left:832.5px;top:81.5px;font-size:9.28px;color:#5a5a5a">色板</div>
<div class="a" style="left:856px;top:80px;width:29px;height:14px;background:linear-gradient(#868686,#7c7c7c);border-right:1px solid #6a6a6a"></div>
<div class="t" style="left:861.5px;top:81.5px;font-size:9px;color:#5a5a5a">样式</div>
<svg style="left:980px;top:84px" width="10" height="7" viewBox="0 0 10 7" ><path d="M0 2H3L1.5 4Z" fill="#333"/><path d="M4 0.5H10M4 3.5H10M4 6.5H10" stroke="#333" stroke-width="1.2"/></svg>
<div class="a" style="left:816px;top:112px;width:15px;height:15px;background:#fff;border:1px solid #a9a9a9"></div>
<div class="a" style="left:807px;top:103px;width:16px;height:16px;background:#fff;border:2px solid #3c3c3c"></div>
<div class="t" style="left:834.0px;top:101.3px;font-size:9.50px;color:#3a3a3a">R</div>
<div class="a" style="left:846px;top:106px;width:76px;height:5px;background:linear-gradient(90deg,#19dff5 0%,#19dff5 42%,#fff 95%);border:1px solid #c8c8c8;border-top-color:#9a9a9a"></div>
<svg style="left:918px;top:112px" width="7" height="5" viewBox="0 0 7 5" ><path d="M3.5 0.5L6.5 3.5V4.5H0.5V3.5Z" fill="#e8e8e8" stroke="#5a706a" stroke-width="1"/></svg>
<div class="a" style="left:926px;top:101px;width:27px;height:15px;background:#fff;border:1px solid #e2e2e2"></div>
<div class="t" style="left:928.5px;top:100.5px;font-size:8.65px;color:#222">255</div>
<div class="t" style="left:835.0px;top:122.0px;font-size:9.50px;color:#4a5a5a">G</div>
<div class="a" style="left:846px;top:126px;width:76px;height:5px;background:linear-gradient(90deg,#e81fe0 0%,#e81fe0 42%,#fff 95%);border:1px solid #c8c8c8;border-top-color:#9a9a9a"></div>
<svg style="left:918px;top:132px" width="7" height="5" viewBox="0 0 7 5" ><path d="M3.5 0.5L6.5 3.5V4.5H0.5V3.5Z" fill="#e8e8e8" stroke="#5a706a" stroke-width="1"/></svg>
<div class="a" style="left:926px;top:121px;width:27px;height:15px;background:#fff;border:1px solid #e2e2e2"></div>
<div class="t" style="left:928.5px;top:120.5px;font-size:8.65px;color:#222">255</div>
<div class="t" style="left:835.0px;top:142.3px;font-size:9.50px;color:#555">B</div>
<div class="a" style="left:846px;top:147px;width:76px;height:5px;background:linear-gradient(90deg,#f3f01a 0%,#f3f01a 42%,#fff 95%);border:1px solid #c8c8c8;border-top-color:#9a9a9a"></div>
<svg style="left:918px;top:153px" width="7" height="5" viewBox="0 0 7 5" ><path d="M3.5 0.5L6.5 3.5V4.5H0.5V3.5Z" fill="#e8e8e8" stroke="#5a706a" stroke-width="1"/></svg>
<div class="a" style="left:926px;top:142px;width:27px;height:15px;background:#fff;border:1px solid #e2e2e2"></div>
<div class="t" style="left:928.5px;top:141.5px;font-size:8.65px;color:#222">255</div>
<div class="a" style="left:807px;top:166px;width:154px;height:11px;background:linear-gradient(90deg,#e0100f 0%,#f0a010 9%,#f6ee20 17%,#58b820 25%,#10983a 32%,#10a890 42%,#18a8e0 52%,#1858c0 62%,#281880 70%,#780c80 78%,#c8107a 86%,#e81040 93%,#f01818 96%)"></div>
<div class="a" style="left:807px;top:166px;width:154px;height:11px;background:linear-gradient(180deg,rgba(255,255,255,.75) 0%,rgba(255,255,255,0) 45%,rgba(0,0,0,0) 55%,rgba(0,0,0,.6) 100%)"></div>
<div class="a" style="left:954px;top:166px;width:7px;height:5px;background:#fff"></div>
<div class="a" style="left:954px;top:171px;width:7px;height:6px;background:#050a20"></div>
<div class="a" style="left:801px;top:182px;width:192px;height:2px;background:#4a4a4a"></div>
<div class="a" style="left:801px;top:184px;width:192px;height:14px;background:linear-gradient(#8c8c8c,#868686)"></div>
<div class="a" style="left:801px;top:184px;width:27px;height:14px;background:linear-gradient(#868686,#7c7c7c);border-right:1px solid #6a6a6a"></div>
<div class="t" style="left:806.0px;top:185.5px;font-size:8.24px;letter-spacing:0.50px;color:#5a5a5a">调整</div>
<div class="a" style="left:828px;top:184px;width:28px;height:14px;background:#d6d6d6"></div>
<div class="t" style="left:832.5px;top:185.5px;font-size:9.28px;color:#6a6a6a">蒙版</div>
<svg style="left:980px;top:188px" width="10" height="7" viewBox="0 0 10 7" ><path d="M0 2H3L1.5 4Z" fill="#333"/><path d="M4 0.5H10M4 3.5H10M4 6.5H10" stroke="#333" stroke-width="1.2"/></svg>
<div class="a" style="left:807px;top:200px;width:19px;height:25px;border:1px solid #5a5a5a;background-color:#fff;background-image:linear-gradient(45deg,#d4d4d4 25%,transparent 25%,transparent 75%,#d4d4d4 75%),linear-gradient(45deg,#d4d4d4 25%,transparent 25%,transparent 75%,#d4d4d4 75%);background-size:6px 6px;background-position:0 0,3px 3px"></div>
<div class="t" style="left:831.5px;top:206.5px;font-size:10px;font-style:italic;font-weight:bold;letter-spacing:-0.75px;color:#2a2a2a">未选择蒙版</div>
<svg style="left:930px;top:206px" width="11" height="11" viewBox="0 0 11 11" ><rect x="0.5" y="0.5" width="10" height="10" fill="#e6e6e6" stroke="#555"/><rect x="2.5" y="2.5" width="6" height="6" fill="#8a8a8a"/><circle cx="5.5" cy="5.5" r="2" fill="#f2f2f2"/></svg>
<svg style="left:952px;top:206px" width="10" height="11" viewBox="0 0 10 11" ><path d="M1 5L4 2L7 5L4 8Z" fill="none" stroke="#8a8a8a" stroke-width="1.2"/><path d="M5 7L9 3M6.5 9.5L9 7" stroke="#9a9a9a" stroke-width="1.2"/></svg>
<div class="a" style="left:806px;top:228px;width:158px;height:1px;background:#bdbdbd"></div>
<div class="t" style="left:804.0px;top:237.0px;font-size:9.32px;color:#ececec">浓度:</div>
<div class="a" style="left:921px;top:233px;width:43px;height:16px;background:#d8d8d8;border:1px solid #ececec"></div>
<div class="a" style="left:808px;top:257px;width:152px;height:2px;background:#f0f0f0;border-top:1px solid #bcbcbc"></div>
<div class="t" style="left:804.0px;top:267.5px;font-size:8.90px;color:#ececec">羽化:</div>
<div class="a" style="left:921px;top:265px;width:43px;height:16px;background:#d8d8d8;border:1px solid #ececec"></div>
<div class="a" style="left:808px;top:289px;width:152px;height:2px;background:#f0f0f0;border-top:1px solid #bcbcbc"></div>
<div class="t" style="left:805.0px;top:300.0px;font-size:9.32px;letter-spacing:-0.50px;color:#ececec">调整:</div>
<div class="a" style="left:903px;top:300px;width:61px;height:13px;background:linear-gradient(#f4f4f4,#e2e2e2);border:1px solid #c4c4c4;border-radius:2px"></div>
<div class="t" style="left:907.8px;top:301.0px;font-size:10px;letter-spacing:0.23px;color:#adadad">蒙版边缘...</div>
<div class="a" style="left:903px;top:322px;width:61px;height:13px;background:linear-gradient(#f4f4f4,#e2e2e2);border:1px solid #c4c4c4;border-radius:2px"></div>
<div class="t" style="left:907.8px;top:323.0px;font-size:10px;letter-spacing:0.23px;color:#adadad">颜色范围...</div>
<div class="a" style="left:903px;top:344px;width:61px;height:13px;background:linear-gradient(#f4f4f4,#e2e2e2);border:1px solid #c4c4c4;border-radius:2px"></div>
<div class="t" style="left:922.0px;top:345.0px;font-size:10px;letter-spacing:0.10px;color:#adadad">反相</div>
<div class="a" style="left:806px;top:364px;width:158px;height:1px;background:#bdbdbd"></div>
<svg style="left:809px;top:367px" width="9" height="9" viewBox="0 0 9 9" ><circle cx="4.5" cy="4.5" r="3.5" fill="#dcdcdc" stroke="#c6c6c6" stroke-width="1"/></svg>
<svg style="left:829px;top:367px" width="13" height="9" viewBox="0 0 13 9" ><path d="M0.5 4.5C3 0.5 10 0.5 12.5 4.5C10 8.5 3 8.5 0.5 4.5Z" fill="#d8ecea" stroke="#9ec0bc" stroke-width="1"/><circle cx="6.5" cy="4.5" r="1.8" fill="#9bb"/></svg>
<svg style="left:851px;top:366px" width="10" height="10" viewBox="0 0 10 10" ><path d="M0.5 1.5H9.5L8 7H2Z" fill="#b8868c"/><path d="M3 7.5L2 9.5M7 7.5L8 9.5" stroke="#a07078" stroke-width="1.2"/></svg>
<svg style="left:951px;top:366px" width="8" height="10" viewBox="0 0 8 10" ><path d="M1 3H7V9.5H1Z" fill="#e4e4e4" stroke="#666" stroke-width="1"/><path d="M0 2.5H8M3 1H5" stroke="#555" stroke-width="1"/><path d="M4.5 3V9" stroke="#444" stroke-width="1.5"/></svg>
<div class="a" style="left:801px;top:380px;width:192px;height:2px;background:#3e3e3e"></div>
<div class="a" style="left:801px;top:382px;width:192px;height:14px;background:linear-gradient(#8c8c8c,#868686)"></div>
<div class="a" style="left:801px;top:382px;width:27px;height:14px;background:#d6d6d6"></div>
<div class="t" style="left:806.0px;top:383.5px;font-size:9px;color:#6a6a6a">图层</div>
<div class="a" style="left:828px;top:382px;width:28px;height:14px;background:linear-gradient(#868686,#7c7c7c);border-right:1px solid #6a6a6a"></div>
<div class="t" style="left:833.5px;top:383.5px;font-size:9px;letter-spacing:-0.50px;color:#5a5a5a">通道</div>
<div class="a" style="left:856px;top:382px;width:29px;height:14px;background:linear-gradient(#868686,#7c7c7c);border-right:1px solid #6a6a6a"></div>
<div class="t" style="left:861.5px;top:383.5px;font-size:9px;color:#5a5a5a">路径</div>
<svg style="left:980px;top:386px" width="10" height="7" viewBox="0 0 10 7" ><path d="M0 2H3L1.5 4Z" fill="#333"/><path d="M4 0.5H10M4 3.5H10M4 6.5H10" stroke="#333" stroke-width="1.2"/></svg>
<div class="a" style="left:804px;top:399px;width:95px;height:16px;background:#fff;border:1px solid #e0e0e0"></div>
<div class="t" style="left:807.5px;top:401.5px;font-size:10px;letter-spacing:0.50px;color:#1a1a1a">正常</div>
<svg style="left:890px;top:405.5px" width="7" height="3" viewBox="0 0 7 3" ><path d="M0 0H7L3.5 3Z" fill="#111"/></svg>
<div class="t" style="left:901.0px;top:399.5px;font-size:10px;letter-spacing:-0.25px;color:#1a1a1a">不透明度:</div>
<div class="a" style="left:945px;top:399px;width:31px;height:14px;background:#fff;border:1px solid #e0e0e0"></div>
<div class="t" style="left:947.5px;top:398.5px;font-size:9px;letter-spacing:-0.33px;color:#222">100%</div>
<div class="a" style="left:977px;top:399px;width:13px;height:14px;background:linear-gradient(#f2f2f2,#d8d8d8);border:1px solid #c0c0c0"></div>
<svg style="left:981px;top:403.5px" width="4" height="5" viewBox="0 0 4 5" ><path d="M0 0L4 2.5L0 5Z" fill="#666"/></svg>
<div class="a" style="left:801px;top:417px;width:192px;height:1px;background:#c2c2c2"></div>
<div class="t" style="left:806.5px;top:421.5px;font-size:10px;letter-spacing:-0.50px;color:#1a1a1a">锁定:</div>
<svg style="left:833px;top:422px" width="10" height="10" viewBox="0 0 10 10" ><rect x="0.5" y="0.5" width="9" height="9" fill="#fff" stroke="#555"/><path d="M0.5 0.5H5V5H0.5ZM5 5H9.5V9.5H5Z" fill="#cfcfcf"/></svg>
<svg style="left:846px;top:421px" width="11" height="11" viewBox="0 0 11 11" ><path d="M1 10C2 7 4 7 5 6.5L10 0.5L7 7C6.5 9 3 10.5 1 10Z" fill="#333"/></svg>
<svg style="left:861px;top:421px" width="11" height="11" viewBox="0 0 11 11" ><path d="M5.5 0.5V10.5M0.5 5.5H10.5" stroke="#333" stroke-width="1.3"/><path d="M5.5 0L7 2H4ZM5.5 11L7 9H4ZM0 5.5L2 4V7ZM11 5.5L9 4V7Z" fill="#333"/></svg>
<svg style="left:876px;top:421px" width="9" height="11" viewBox="0 0 9 11" ><rect x="0.5" y="5" width="8" height="5.5" fill="#333"/><path d="M2 5V3.5A2.5 2.5 0 0 1 7 3.5V5" fill="none" stroke="#333" stroke-width="1.3"/></svg>
<div class="t" style="left:921.0px;top:421.5px;font-size:10px;letter-spacing:-0.50px;color:#1a1a1a">填充:</div>
<div class="a" style="left:945px;top:420px;width:31px;height:14px;background:#fff;border:1px solid #e0e0e0"></div>
<div class="t" style="left:947.5px;top:420.0px;font-size:9px;letter-spacing:-0.33px;color:#222">100%</div>
<div class="a" style="left:977px;top:420px;width:13px;height:14px;background:linear-gradient(#f2f2f2,#d8d8d8);border:1px solid #c0c0c0"></div>
<svg style="left:981px;top:424.5px" width="4" height="5" viewBox="0 0 4 5" ><path d="M0 0L4 2.5L0 5Z" fill="#666"/></svg>
<div class="a" style="left:801px;top:437px;width:179px;height:1px;background:#bdbdbd"></div>
<div class="a" style="left:980px;top:437px;width:13px;height:312px;background:#e6e6e6;border-left:1px solid #cfcfcf"></div>
<svg style="left:983px;top:442px" width="7" height="4" viewBox="0 0 7 4" ><path d="M0 4L3.5 0L7 4Z" fill="#a0a0a0"/></svg>
<svg style="left:983px;top:739px" width="7" height="4" viewBox="0 0 7 4" ><path d="M0 0L3.5 4L7 0Z" fill="#8a8a8a"/></svg>
<div class="a" style="left:801px;top:438px;width:20px;height:30px;background:#d2d2d2;border-right:1px solid #bdbdbd"></div>
<div class="a" style="left:821px;top:438px;width:159px;height:30px;background:#3399ff"></div>
<svg style="left:806px;top:448.5px" width="10" height="7" viewBox="0 0 10 7" ><path d="M0.5 3.5C2.5 0.3 7.5 0.3 9.5 3.5C7.5 6.7 2.5 6.7 0.5 3.5Z" fill="#3a3a3a"/><ellipse cx="5" cy="2.6" rx="2.2" ry="1.1" fill="#8a8a8a"/></svg>
<div class="a" style="left:821px;top:438px;width:22px;height:29px;border:2px solid #2c4a78;border-left-width:3px;border-top-width:3px;background-color:#fff;background-image:linear-gradient(45deg,#f2c8c0 25%,transparent 25%,transparent 75%,#f2c8c0 75%),linear-gradient(45deg,#c8dcf2 25%,transparent 25%,transparent 75%,#c8dcf2 75%);background-size:6px 6px;background-position:0 0,3px 3px"></div>
<div class="t" style="left:846.0px;top:446.5px;font-size:9.54px;letter-spacing:-0.33px;color:#fff">图层 1</div>
<div class="a" style="left:801px;top:468px;width:179px;height:1px;background:#bdbdbd"></div>
<div class="a" style="left:801px;top:469px;width:20px;height:29px;background:#d2d2d2;border-right:1px solid #bdbdbd"></div>
<svg style="left:806px;top:479px" width="10" height="7" viewBox="0 0 10 7" ><path d="M0.5 3.5C2.5 0.3 7.5 0.3 9.5 3.5C7.5 6.7 2.5 6.7 0.5 3.5Z" fill="#3a3a3a"/><ellipse cx="5" cy="2.6" rx="2.2" ry="1.1" fill="#8a8a8a"/></svg>
<div class="a" style="left:822px;top:470px;width:20px;height:26px;background:#fff;border:2px solid #7c7c7c"></div>
<div class="t" style="left:847.0px;top:478.0px;font-size:9.49px;font-style:italic;font-weight:bold;color:#2a2a2a">背景</div>
<svg style="left:960px;top:478px" width="9" height="11" viewBox="0 0 9 11" ><rect x="0.5" y="4.5" width="8" height="6" fill="#f2f2f2" stroke="#555"/><path d="M2 4.5V3.5A2.5 2.5 0 0 1 7 3.5V4.5" fill="none" stroke="#444" stroke-width="1.2"/></svg>
<div class="a" style="left:801px;top:498px;width:179px;height:1px;background:#a8a8a8"></div>
<div class="a" style="left:801px;top:749px;width:192px;height:15px;background:#d0d0d0;border-top:1px solid #bcbcbc"></div>
<svg style="left:837px;top:753px" width="12" height="6" viewBox="0 0 12 6" ><rect x="0.5" y="0.8" width="5.4" height="4.4" rx="2.2" fill="none" stroke="#8e8e8e" stroke-width="1.5"/><rect x="6" y="0.8" width="5.4" height="4.4" rx="2.2" fill="none" stroke="#8e8e8e" stroke-width="1.5"/></svg>
<div class="t" style="left:859px;top:749px;font-family:'Liberation Serif',serif;font-style:italic;font-weight:bold;font-size:11px;color:#2a2a2a">fx</div>
<div class="a" style="left:870px;top:760px;width:2px;height:2px;background:#222"></div>
<svg style="left:881px;top:752px" width="10" height="9" viewBox="0 0 10 9" ><rect x="0.5" y="0.5" width="9" height="8" fill="#5a5a5a" stroke="#3a3a3a"/><circle cx="5" cy="4.5" r="2.5" fill="#f4f4f4"/></svg>
<svg style="left:903px;top:752px" width="9" height="9" viewBox="0 0 9 9" ><circle cx="4.5" cy="4.5" r="4" fill="#fff" stroke="#333"/><path d="M1.7 7.3A4 4 0 0 1 7.3 1.7Z" fill="#333"/></svg>
<div class="a" style="left:913px;top:760px;width:2px;height:2px;background:#222"></div>
<svg style="left:927px;top:752px" width="6" height="8" viewBox="0 0 6 8" ><path d="M0.5 2H2L3 0.8H5.5V7.5H0.5Z" fill="#ddd" stroke="#666"/></svg>
<svg style="left:946px;top:753px" width="8" height="7" viewBox="0 0 8 7" ><rect x="0.5" y="0.5" width="7" height="6" fill="#fff" stroke="#444"/><path d="M0.5 4H3V6.5" fill="none" stroke="#444"/></svg>
<svg style="left:968px;top:752px" width="6" height="8" viewBox="0 0 6 8" ><path d="M0.8 2.5H5.2V7.5H0.8Z" fill="#e4e4e4" stroke="#444" stroke-width="1"/><path d="M0 2H6M2 0.8H4" stroke="#333" stroke-width="1"/><path d="M3 2.5V7" stroke="#2a4a9a" stroke-width="1.4"/></svg>
<svg style="left:0;top:0" width="1000" height="774" viewBox="0 0 1000 774"><path d="M822 648L938 738" stroke="#d71414" stroke-width="3.6" stroke-linecap="round"/><path d="M930 741L938 728L944 745L938 741Z" fill="#d71414"/><ellipse cx="946" cy="754" rx="20" ry="20.5" fill="none" stroke="#d71414" stroke-width="3.4"/><g fill="#fff" opacity="0.72"><ellipse cx="836" cy="689" rx="4.6" ry="6.6" transform="rotate(-12 836 689)"/><ellipse cx="848" cy="677" rx="4.8" ry="6.4"/><ellipse cx="864.5" cy="677" rx="4.8" ry="6.4"/><ellipse cx="875" cy="692" rx="4.4" ry="6.2" transform="rotate(18 875 692)"/><path d="M855 689C862 689 866 696 871 701C877 706 880 711 878 717C876 723 868 724 862 722C858 721 852 721 848 722C842 724 834 723 832 717C830 711 834 706 839 701C844 696 848 689 855 689Z"/></g><text x="839" y="718" font-family="Liberation Sans,sans-serif" font-weight="bold" font-size="23.5" fill="#cdcdcd" letter-spacing="-0.5">du</text><text x="884" y="720" font-family="Liberation Sans,Noto Sans CJK SC,sans-serif" font-weight="bold" font-size="29" fill="#fff" opacity="0.85">经验</text><clipPath id="wc"><path d="M755 744H830V753H755Z"/></clipPath><text x="762" y="746" textLength="66" lengthAdjust="spacing" clip-path="url(#wc)" font-family="Liberation Sans,sans-serif" font-size="20.4" fill="#fff" opacity="0.9">jingya</text><text x="830" y="746" textLength="111" lengthAdjust="spacing" font-family="Liberation Sans,sans-serif" font-size="20.4" fill="#fff" opacity="0.9">n.baidu.com</text></svg>
</div></body></html>
